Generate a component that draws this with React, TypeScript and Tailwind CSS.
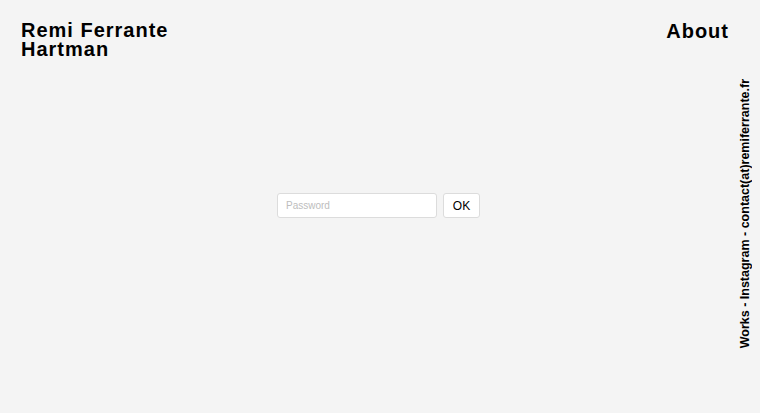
import React from "react";

export default function App() {
  return (
    <div
      className="relative flex h-[413px] w-full flex-col bg-[#f4f4f4] text-black"
      style={{ fontFamily: '"Liberation Sans", Arial, sans-serif' }}
    >
      <header className="flex items-start justify-between pl-[21px] pr-[31px] pt-[21px]">
        <h1 className="text-[20px] font-bold leading-[19px] tracking-[1px]">
          Remi Ferrante
          <br />
          Hartman
        </h1>
        <a className="text-[20px] font-bold leading-[20px] tracking-[1px]">About</a>
      </header>
      <main className="flex flex-1 items-start justify-center pt-[134px] pr-[3px]">
        <form className="flex items-center gap-[6px]" onSubmit={(e) => e.preventDefault()}>
          <input
            type="password"
            placeholder="Password"
            className="h-[25px] w-[160px] rounded-[3px] border border-[#dcdcdc] bg-white px-[8px] text-[10px] placeholder:text-[#bdbdbd] outline-none"
          />
          <button
            type="submit"
            className="h-[25px] w-[37px] rounded-[3px] border border-[#dcdcdc] bg-white text-[12px]"
          >
            OK
          </button>
        </form>
      </main>
      <nav className="absolute right-[8px] top-[78px] h-[271px] flex items-center justify-center">
        <span className="rotate-180 whitespace-nowrap text-[12.5px] font-bold leading-[13px] [writing-mode:vertical-rl]">
          Works - Instagram - contact(at)remiferrante.fr
        </span>
      </nav>
    </div>
  );
}
